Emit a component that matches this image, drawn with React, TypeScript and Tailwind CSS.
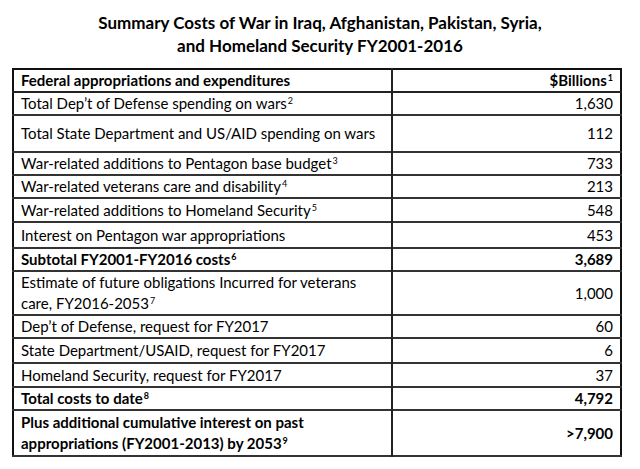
import React from 'react';

interface CostRow {
  label: React.ReactNode;
  value: string;
  bold?: boolean;
  h: string;
}

const Sup: React.FC<{ n: number }> = ({ n }) => (
  <span className="relative -top-[5px] text-[9px] leading-none ml-[1px]">{n}</span>
);

const rows: CostRow[] = [
  { label: <>Total Dep’t of Defense spending on wars<Sup n={2} /></>, value: '1,630', h: 'h-[22px]' },
  { label: 'Total State Department and US/AID spending on wars', value: '112', h: 'h-[37px]' },
  { label: <>War-related additions to Pentagon base budget<Sup n={3} /></>, value: '733', h: 'h-[23px]' },
  { label: <>War-related veterans care and disability<Sup n={4} /></>, value: '213', h: 'h-[22px]' },
  { label: <>War-related additions to Homeland Security<Sup n={5} /></>, value: '548', h: 'h-[24px]' },
  { label: 'Interest on Pentagon war appropriations', value: '453', h: 'h-[26px]' },
  { label: <>Subtotal FY2001-FY2016 costs<Sup n={6} /></>, value: '3,689', bold: true, h: 'h-[22px]' },
  {
    label: <>Estimate of future obligations Incurred for veterans<br />care, FY2016-2053<Sup n={7} /></>,
    value: '1,000',
    h: 'h-[41px]',
  },
  { label: 'Dep’t of Defense, request for FY2017', value: '60', h: 'h-[21px]' },
  { label: 'State Department/USAID, request for FY2017', value: '6', h: 'h-[25px]' },
  { label: 'Homeland Security, request for FY2017', value: '37', h: 'h-[24px]' },
  { label: <>Total costs to date<Sup n={8} /></>, value: '4,792', bold: true, h: 'h-[23px]' },
  {
    label: <>Plus additional cumulative interest on past<br />appropriations (FY2001-2013) by 2053<Sup n={9} /></>,
    value: '>7,900',
    bold: true,
    h: 'h-[46px]',
  },
];

export default function App() {
  return (
    <div
      className="w-[640px] h-[469px] bg-white text-black overflow-hidden"
      style={{ fontFamily: 'Lato, "Open Sans", sans-serif' }}
    >
      <h1 className="pt-[11px] text-center text-[17px] font-bold leading-[23px]">
        Summary Costs of War in Iraq, Afghanistan, Pakistan, Syria,
        <br />
        and Homeland Security FY2001-2016
      </h1>

      <div className="ml-[12px] mt-[11px] w-[610px]">
        <table className="w-full border-collapse border-2 border-[#111] text-[15px] leading-[21px]">
          <tbody>
            <tr className="h-[23px] border-b-2 border-[#222]">
              <td className="pl-[7px] font-bold border-r-2 border-[#222] w-[379px]">
                Federal appropriations and expenditures
              </td>
              <td className="pr-[7px] text-right font-bold">
                $Billions<Sup n={1} />
              </td>
            </tr>
            {rows.map((row, i) => (
              <tr key={i} className={`${row.h} border-b-2 border-[#333]`}>
                <td className={`pl-[7px] border-r-2 border-[#222] ${row.bold ? 'font-bold' : ''}`}>
                  {row.label}
                </td>
                <td className={`pr-[7px] text-right ${row.bold ? 'font-bold' : ''}`}>{row.value}</td>
              </tr>
            ))}
          </tbody>
        </table>
      </div>
    </div>
  );
}
